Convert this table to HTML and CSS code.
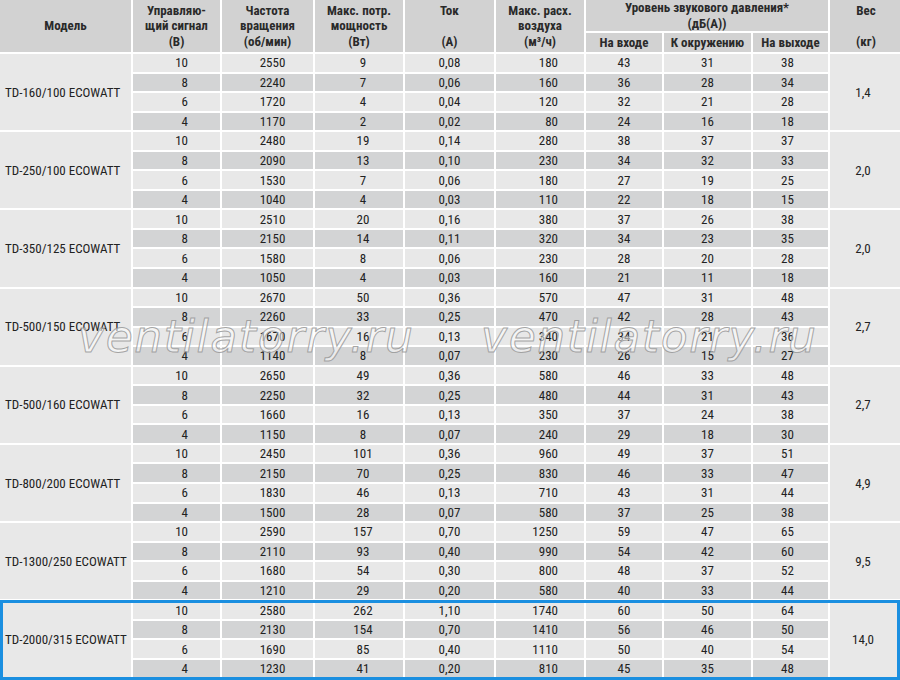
FILE: index.html
```html
<!DOCTYPE html>
<html lang="ru">
<head>
<meta charset="utf-8">
<link rel="stylesheet" href="styles.css">
</head>
<body>
<div class="sheet">
<table class="spec">
<colgroup>
<col class="w-model"><col class="w-sig"><col class="w-rpm"><col class="w-pow"><col class="w-cur"><col class="w-air"><col class="w-in"><col class="w-env"><col class="w-out"><col class="w-kg">
</colgroup>
<thead>
<tr class="h1">
<th rowspan="2">Модель</th>
<th rowspan="2">Управляю-<br>щий сигнал<br>(В)</th>
<th rowspan="2">Частота<br>вращения<br>(об/мин)</th>
<th rowspan="2">Макс. потр.<br>мощность<br>(Вт)</th>
<th rowspan="2">Ток<br><br>(А)</th>
<th rowspan="2">Макс. расх.<br>воздуха<br>(м³/ч)</th>
<th colspan="3">Уровень звукового давления*<br>(дБ(А))</th>
<th rowspan="2">Вес<br><br>(кг)</th>
</tr>
<tr class="h2"><th>На входе</th><th>К окружению</th><th>На выходе</th></tr>
</thead>
<tbody id="body"></tbody>
</table>
<div class="watermark wm-a">ventilatorry.ru</div>
<div class="watermark wm-b">ventilatorry.ru</div>
<div class="highlight"></div>
</div>
<script src="app.js"></script>
</body>
</html>
```

FILE: app.js
```js
const data = [
  ["TD-160/100 ECOWATT", "1,4", [
    ["10","2550","9","0,08","180","43","31","38"],
    ["8","2240","7","0,06","160","36","28","34"],
    ["6","1720","4","0,04","120","32","21","28"],
    ["4","1170","2","0,02","80","24","16","18"]]],
  ["TD-250/100 ECOWATT", "2,0", [
    ["10","2480","19","0,14","280","38","37","37"],
    ["8","2090","13","0,10","230","34","32","33"],
    ["6","1530","7","0,06","180","27","19","25"],
    ["4","1040","4","0,03","110","22","18","15"]]],
  ["TD-350/125 ECOWATT", "2,0", [
    ["10","2510","20","0,16","380","37","26","38"],
    ["8","2150","14","0,11","320","34","23","35"],
    ["6","1580","8","0,06","230","28","20","28"],
    ["4","1050","4","0,03","160","21","11","18"]]],
  ["TD-500/150 ECOWATT", "2,7", [
    ["10","2670","50","0,36","570","47","31","48"],
    ["8","2260","33","0,25","470","42","28","43"],
    ["6","1670","16","0,13","340","34","21","36"],
    ["4","1140","8","0,07","230","26","15","27"]]],
  ["TD-500/160 ECOWATT", "2,7", [
    ["10","2650","49","0,36","580","46","33","48"],
    ["8","2250","32","0,25","480","44","31","43"],
    ["6","1660","16","0,13","350","37","24","38"],
    ["4","1150","8","0,07","240","29","18","30"]]],
  ["TD-800/200 ECOWATT", "4,9", [
    ["10","2450","101","0,36","960","49","37","51"],
    ["8","2150","70","0,25","830","46","33","47"],
    ["6","1830","46","0,13","710","43","31","44"],
    ["4","1500","28","0,07","580","37","25","38"]]],
  ["TD-1300/250 ECOWATT", "9,5", [
    ["10","2590","157","0,70","1250","59","47","65"],
    ["8","2110","93","0,40","990","54","42","60"],
    ["6","1680","54","0,30","800","48","37","52"],
    ["4","1210","29","0,20","580","40","33","44"]]],
  ["TD-2000/315 ECOWATT", "14,0", [
    ["10","2580","262","1,10","1740","60","50","64"],
    ["8","2130","154","0,70","1410","56","46","50"],
    ["6","1690","85","0,40","1110","50","40","54"],
    ["4","1230","41","0,20","810","45","35","48"]]]
];
const cls = ["sig","rpm","pow","cur","air","in","env","out"];
const body = document.getElementById("body");
let html = "";
data.forEach(([model, kg, rows]) => {
  rows.forEach((r, i) => {
    html += '<tr class="' + (i % 2 ? "dark" : "light") + '">';
    if (i === 0) html += '<td class="model" rowspan="4">' + model + '</td>';
    r.forEach((v, j) => { html += '<td class="' + cls[j] + '">' + v + '</td>'; });
    if (i === 0) html += '<td class="kg" rowspan="4">' + kg + '</td>';
    html += '</tr>';
  });
});
body.innerHTML = html;
```

FILE: styles.css
```css
html, body { margin: 0; padding: 0; background: #fff; }
body { width: 900px; height: 680px; overflow: hidden; }
.sheet { position: relative; width: 900px; height: 680px; overflow: hidden; }
.spec {
  border-collapse: separate;
  border-spacing: 2px;
  table-layout: fixed;
  width: 906px;
  margin: -2px 0 0 -2px;
  font-family: "Liberation Sans Narrow", "Roboto Condensed", "DejaVu Sans Condensed", Roboto, sans-serif;
  font-size: 13px;
  color: #222;
}
.w-model { width: 131px; } .w-sig { width: 87px; } .w-rpm { width: 91px; } .w-pow { width: 88px; }
.w-cur { width: 89px; } .w-air { width: 88px; } .w-in { width: 76px; } .w-env { width: 87px; }
.w-out { width: 75px; } .w-kg { width: 72px; }
th {
  background: #d2d2d2;
  font-weight: bold;
  font-size: 13px;
  line-height: 15.5px;
  padding: 0;
  color: #2a2a2a;
  vertical-align: middle;
  text-align: center;
}
.h1 th { height: 31px; }
.h2 th { height: 19px; line-height: 19px; }
td { padding: 0; height: 17.56px; line-height: 17px; text-align: center; white-space: nowrap; }
.light td { background: #e8e8e8; }
.dark td { background: #d3d4d5; }
td.model, td.kg { background: #e8e8e8; }
td.model { text-align: left; padding-left: 5px; }
td.kg { padding-right: 6px; }
td.sig { text-align: right; padding-right: 32px; }
td.rpm { padding-left: 10px; }
td.pow { padding-left: 8px; }
td.air { text-align: right; padding-right: 26px; }
td.out { padding-right: 6px; }
.watermark {
  position: absolute;
  top: 315px;
  font-family: "DejaVu Sans", sans-serif;
  font-style: italic;
  font-size: 44px;
  line-height: 44px;
  letter-spacing: 1.6px;
  color: rgba(255, 255, 255, 0.55);
  -webkit-text-stroke: 1px rgba(150, 150, 150, 0.85);
  pointer-events: none;
  white-space: nowrap;
}
.wm-a { left: 78px; }
.wm-b { left: 481px; }
.highlight {
  position: absolute;
  left: 0; top: 600px;
  width: 900px; height: 80px;
  box-sizing: border-box;
  border: 3px solid #1b8fe0;
  pointer-events: none;
}
```
